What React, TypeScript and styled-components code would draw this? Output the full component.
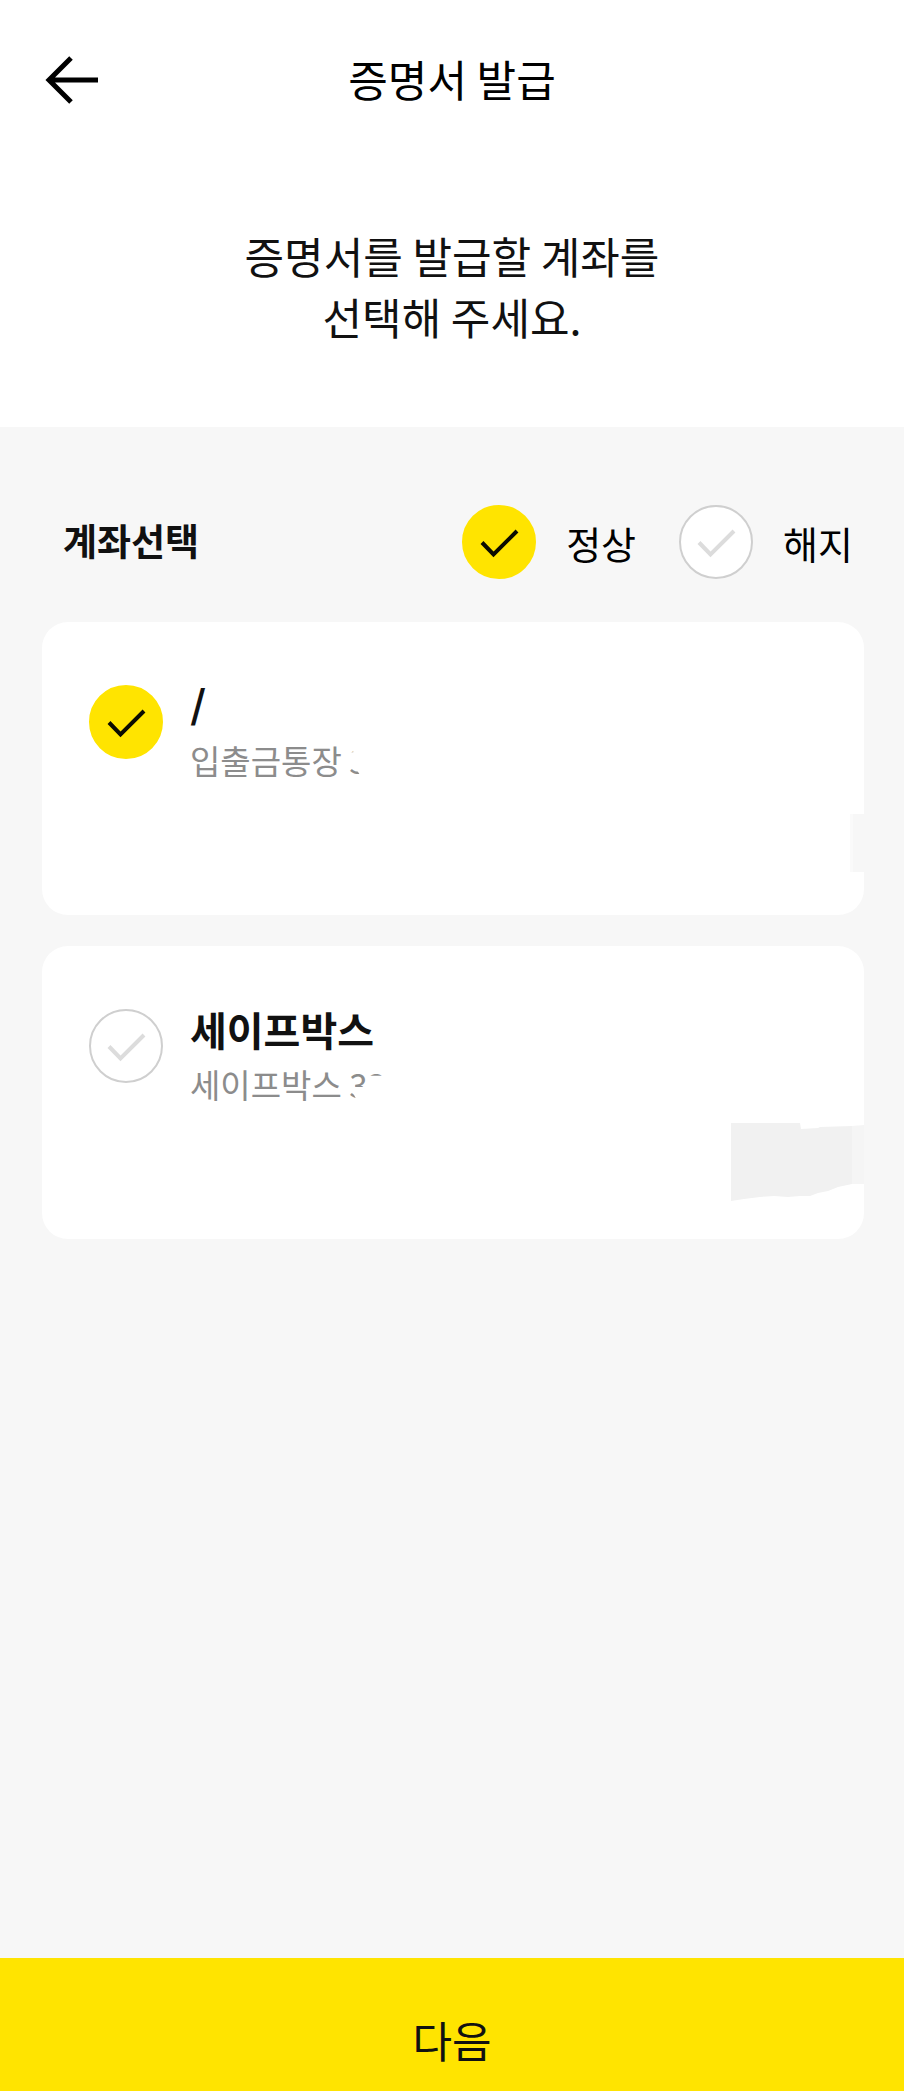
import React, { useState } from 'react';
import styled, { createGlobalStyle } from 'styled-components';

const GlobalStyle = createGlobalStyle`
  *, *::before, *::after { box-sizing: border-box; }
  body {
    margin: 0;
    background: #f7f7f7;
    color: #111;
    font-family: "Noto Sans CJK KR", "Noto Sans", sans-serif;
  }
  button, input { font: inherit; color: inherit; }
`;

const Page = styled.div`
  display: flex;
  flex-direction: column;
  min-height: 100vh;
`;

const Header = styled.header`
  display: grid;
  grid-template-columns: 1fr auto 1fr;
  align-items: center;
  height: 160px;
  padding: 0 40px;
  background: #fff;
`;

const BackButton = styled.button`
  display: flex;
  justify-self: start;
  padding: 0;
  border: 0;
  background: none;
  cursor: pointer;
`;

const Title = styled.h1`
  margin: 0;
  padding-bottom: 4px;
  color: #000;
  font-size: 43px;
  font-weight: 400;
  line-height: 60px;
`;

const Intro = styled.p`
  margin: 0;
  padding: 65px 40px 80px;
  background: #fff;
  font-size: 43px;
  line-height: 61px;
  text-align: center;
`;

const Content = styled.main`
  flex: 1;
  padding: 78px 40px 60px 42px;
`;

const FilterRow = styled.div`
  display: flex;
  align-items: center;
  justify-content: space-between;
  margin-bottom: 43px;
  padding: 0 11px 0 21px;
`;

const SectionTitle = styled.h2`
  margin: 0;
  padding-bottom: 4px;
  font-size: 37px;
  font-weight: 700;
  line-height: 54px;
`;

const Filters = styled.div`
  display: flex;
  gap: 43px;
`;

const FilterLabel = styled.label`
  display: flex;
  align-items: center;
  gap: 30px;
  color: #000;
  font-size: 38px;
  line-height: 54px;
  cursor: pointer;
`;

const FilterText = styled.span`
  padding-top: 2px;
`;

const Mark = styled.span`
  position: relative;
  display: block;
  flex: none;
  width: 74px;
  height: 74px;
`;

const MarkInput = styled.input`
  display: block;
  width: 100%;
  height: 100%;
  margin: 0;
  appearance: none;
  border: 2px solid #cfcfcf;
  border-radius: 50%;
  background: #fff;
  cursor: pointer;

  &:checked {
    border-color: #ffe400;
    background: #ffe400;
  }
`;

const MarkIcon = styled.svg`
  position: absolute;
  inset: 0;
  pointer-events: none;
  fill: none;
  stroke: #dcdcdc;
  stroke-width: 4;

  ${MarkInput}:checked + & {
    stroke: #0b0b00;
  }
`;

const AccountList = styled.ul`
  display: flex;
  flex-direction: column;
  gap: 31px;
  margin: 0;
  padding: 0;
  list-style: none;
`;

const Card = styled.li`
  position: relative;
  min-height: 293px;
  overflow: hidden;
  border-radius: 26px;
  background: #fff;
`;

const CardLabel = styled.label`
  display: flex;
  gap: 27px;
  padding: 60px 47px 0;
  cursor: pointer;

  ${Mark} {
    margin-top: 3px;
  }
`;

const AccountText = styled.span`
  display: flex;
  flex-direction: column;
`;

const AccountName = styled.span<{ $latin?: boolean }>`
  font-family: ${(p) => (p.$latin ? 'Inter, sans-serif' : 'inherit')};
  font-size: ${(p) => (p.$latin ? 43 : 40)}px;
  font-weight: ${(p) => (p.$latin ? 500 : 700)};
  line-height: 46px;
`;

const AccountDetail = styled.span`
  margin-top: 8px;
  color: #8c8c8c;
  font-size: 33px;
  line-height: 48px;
`;

const MaskedDigit = styled.span<{ $clip: string }>`
  display: inline-block;
  clip-path: ${(p) => p.$clip};
`;

const Patch = styled.svg`
  position: absolute;
  right: 0;
  bottom: 0;
  pointer-events: none;
`;

const NextButton = styled.button`
  flex: none;
  height: 133px;
  padding: 28px 0 0;
  border: 0;
  background: #ffe400;
  font-size: 43px;
  line-height: 60px;
  cursor: pointer;
`;

type CheckMarkProps = {
  type: 'radio' | 'checkbox';
  name: string;
  checked: boolean;
  onChange: () => void;
};

function CheckMark(props: CheckMarkProps) {
  return (
    <Mark>
      <MarkInput {...props} />
      <MarkIcon width="74" height="74" viewBox="0 0 74 74" aria-hidden="true">
        <path d="M20 37.5 L31.5 49.5 L55 26" />
      </MarkIcon>
    </Mark>
  );
}

const filters = ['정상', '해지'];

// Only the parts of the account number outside the mask stay visible.
const bottomStub = 'polygon(0 20%, 22% 20%, 22% 34%, 0 34%, 0 64%, 30% 64%, 60% 82%, 0 82%)';
const mostly = 'polygon(0 0, 100% 0, 100% 42%, 75% 56%, 30% 56%, 30% 40%, 0 40%, 0 64%, 14% 64%, 42% 84%, 0 84%)';
const topStub = 'polygon(0 0, 100% 0, 100% 33%, 0 33%)';

export default function App() {
  const [filter, setFilter] = useState('정상');
  const [account, setAccount] = useState(0);

  return (
    <Page>
      <GlobalStyle />
      <Header>
        <BackButton type="button" aria-label="뒤로">
          <svg width="64" height="64" viewBox="0 0 64 64" fill="none" stroke="#000" strokeWidth="5" aria-hidden="true">
            <path d="M31 10 L9 32 L31 54 M9 32 H58" />
          </svg>
        </BackButton>
        <Title>증명서 발급</Title>
      </Header>
      <Intro>
        증명서를 발급할 계좌를
        <br />
        선택해 주세요.
      </Intro>
      <Content>
        <FilterRow>
          <SectionTitle>계좌선택</SectionTitle>
          <Filters role="radiogroup" aria-label="계좌 상태">
            {filters.map((f) => (
              <FilterLabel key={f}>
                <CheckMark type="radio" name="status" checked={filter === f} onChange={() => setFilter(f)} />
                <FilterText>{f}</FilterText>
              </FilterLabel>
            ))}
          </Filters>
        </FilterRow>
        <AccountList>
          <Card>
            <CardLabel>
              <CheckMark type="radio" name="account" checked={account === 0} onChange={() => setAccount(0)} />
              <AccountText>
                <AccountName $latin>/</AccountName>
                <AccountDetail>
                  입출금통장 <MaskedDigit $clip={bottomStub}>3</MaskedDigit>
                </AccountDetail>
              </AccountText>
            </CardLabel>
            <Patch width="14" height="101" viewBox="0 0 14 101" aria-hidden="true">
              <rect x="0" y="0" width="14" height="58" fill="#fafafa" />
              <rect x="3" y="0" width="11" height="58" fill="#f7f7f7" />
            </Patch>
          </Card>
          <Card>
            <CardLabel>
              <CheckMark type="radio" name="account" checked={account === 1} onChange={() => setAccount(1)} />
              <AccountText>
                <AccountName>세이프박스</AccountName>
                <AccountDetail>
                  세이프박스 <MaskedDigit $clip={mostly}>3</MaskedDigit>
                  <MaskedDigit $clip={topStub}>3</MaskedDigit>
                </AccountDetail>
              </AccountText>
            </CardLabel>
            <Patch width="134" height="117" viewBox="0 0 134 117" aria-hidden="true">
              <path
                fill="#f1f1f1"
                d="M1 1 H70 L71 7 L88 6 L90 5 L122 4 V62 L108 65 L98 69 L88 71 L80 74 L70 74 L58 75 L44 74 L30 75 L14 77 L1 79 Z"
              />
              <path fill="#f5f5f5" d="M122 4 L134 3 V62 H122 Z" />
            </Patch>
          </Card>
        </AccountList>
      </Content>
      <NextButton type="button">다음</NextButton>
    </Page>
  );
}
